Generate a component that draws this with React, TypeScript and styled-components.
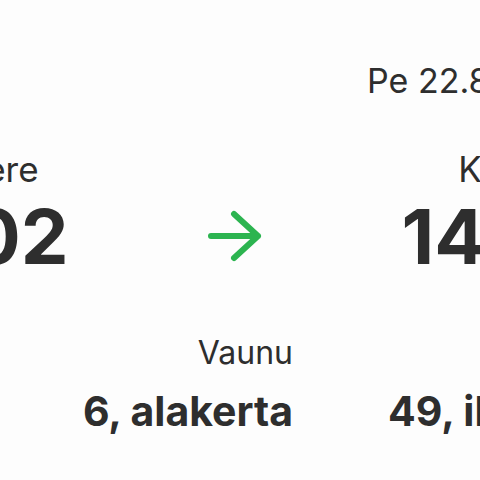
import React, { FC } from 'react'
import styled, { createGlobalStyle } from 'styled-components'

const GlobalStyle = createGlobalStyle`
  html, body {
    margin: 0;
    padding: 0;
    background: #fdfdfd;
  }
  body {
    font-family: Inter, "Liberation Sans", sans-serif;
    color: #2e2e2e;
  }
`

const Page = styled.div`
  width: 480px;
  height: 480px;
  overflow: hidden;
  white-space: nowrap;
`

const DateRow = styled.div`
  padding: 60px 0 0 367px;
  font-size: 34px;
  line-height: 41px;
`

// departure | arrow | arrival, each centred in its own track
const Route = styled.div`
  display: grid;
  grid-template-columns: 272px 266px 274px;
  margin: 47px 0 0 -170px;
  align-items: end;
`

const Stop = styled.div`
  display: flex;
  flex-direction: column;
  align-items: center;
`

const Station = styled.div`
  font-size: 35px;
  line-height: 42px;
`

const Time = styled.div`
  font-size: 76px;
  line-height: 92px;
  font-weight: 700;
`

const ArrowCell = styled.div`
  display: flex;
  justify-content: center;
  align-items: center;
  height: 92px;
  color: #2cb450;
`

const Details = styled.div`
  display: grid;
  grid-template-columns: 293px 260px;
  column-gap: 95px;
  margin-top: 51px;
`

const Detail = styled.div<{ $align: 'left' | 'right' }>`
  display: flex;
  flex-direction: column;
  align-items: ${p => (p.$align === 'right' ? 'flex-end' : 'flex-start')};
`

const Label = styled.div`
  font-size: 32px;
  line-height: 39px;
`

const Value = styled.div`
  margin-top: 15px;
  font-size: 41px;
  line-height: 48px;
  font-weight: 700;
`

const Arrow: FC = () => (
  <svg width="56" height="52" viewBox="0 0 56 52" fill="none">
    <path
      d="M4 26H51M27 4L51 26L27 48"
      stroke="currentColor"
      strokeWidth="6"
      strokeLinecap="round"
      strokeLinejoin="round"
    />
  </svg>
)

export default function App() {
  return (
    <Page>
      <GlobalStyle />
      <DateRow>Pe 22.8.2025</DateRow>
      <Route>
        <Stop>
          <Station>Tampere</Station>
          <Time>12:02</Time>
        </Stop>
        <ArrowCell>
          <Arrow />
        </ArrowCell>
        <Stop>
          <Station>Kotka</Station>
          <Time>14:35</Time>
        </Stop>
      </Route>
      <Details>
        <Detail $align="right">
          <Label>Vaunu</Label>
          <Value>6, alakerta</Value>
        </Detail>
        <Detail $align="left">
          <Label>&nbsp;</Label>
          <Value>49, ikkuna</Value>
        </Detail>
      </Details>
    </Page>
  )
}
